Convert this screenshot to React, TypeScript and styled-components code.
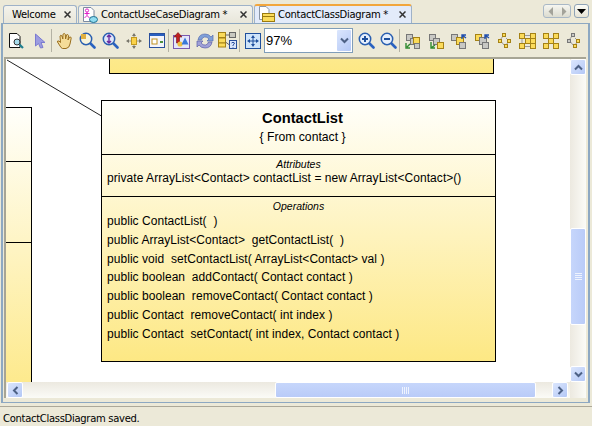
import React from 'react'
import styled, { createGlobalStyle } from 'styled-components'

const Global = createGlobalStyle`
  html, body { margin: 0; padding: 0; background: #ece9d8; }
  * { box-sizing: border-box; }
`

const Page = styled.div`
  width: 592px;
  height: 426px;
  display: flex;
  flex-direction: column;
  overflow: hidden;
  background: #ece9d8;
  font-family: 'Liberation Sans', Arial, sans-serif;
  font-size: 12px;
  color: #000;
`

const TabRow = styled.div`
  height: 23px;
  flex: none;
  display: flex;
  align-items: flex-end;
  padding: 0 3px;
  font-family: 'DejaVu Sans', sans-serif;
  font-size: 10px;
  letter-spacing: -0.3px;
`

const Tab = styled.div<{ $w: number; $active?: boolean }>`
  width: ${(p) => p.$w}px;
  height: ${(p) => (p.$active ? 19 : 18)}px;
  margin-right: 1px;
  display: flex;
  align-items: center;
  padding: 0 5px 0 3px;
  gap: 3px;
  background: ${(p) => (p.$active ? '#e3ebfa' : 'linear-gradient(#f4f3ec, #e8e6da)')};
  border: 1px solid #9fb2c8;
  border-bottom: none;
  border-top: ${(p) => (p.$active ? '2px solid #f2a63c' : '1px solid #9fb2c8')};
  border-radius: 3px 3px 0 0;
  white-space: nowrap;
`

const TabLabel = styled.span<{ $plain?: boolean }>`
  flex: 1;
  padding-left: ${(p) => (p.$plain ? 5 : 0)}px;
`

const TabClose = styled.span`
  width: 7px;
  height: 7px;
  flex: none;
  display: flex;
`

const TabSpacer = styled.div`
  flex: 1;
`

const NavGroup = styled.div`
  width: 28px;
  height: 14px;
  margin: 0 3px 5px 0;
  display: flex;
  align-items: center;
  justify-content: space-around;
  background: linear-gradient(#f6f6f0, #dcdcd0);
  border: 1px solid #a9b8c6;
  border-radius: 3px;
`

const DropButton = styled.div`
  width: 15px;
  height: 14px;
  margin: 0 0 5px 0;
  display: flex;
  align-items: center;
  justify-content: center;
  background: linear-gradient(#fbfbf6, #e6e4d6);
  border: 1px solid #8fa3b6;
  border-radius: 3px;
`

const Panel = styled.div`
  height: 380px;
  flex: none;
  margin: 0 2px 3px 1px;
  display: flex;
  flex-direction: column;
  border: 1px solid #8da8c2;
  border-left: 2px solid #8da8c2;
  border-right: 2px solid #8da8c2;
`

const Toolbar = styled.div`
  height: 33px;
  flex: none;
  display: flex;
  align-items: center;
  padding: 0 0 0 2px;
  background: #ece9d8;
`

const Slot = styled.div<{ $w?: number }>`
  width: ${(p) => p.$w ?? 23}px;
  height: 24px;
  flex: none;
  display: flex;
  align-items: center;
  justify-content: center;
`

const Sep = styled.div`
  width: 1px;
  height: 23px;
  flex: none;
  background: #b4b2a4;
  margin: 0 1px 0 0;
`

const ZoomCombo = styled.div`
  width: 89px;
  height: 25px;
  flex: none;
  margin: 0 2px 0 0;
  display: flex;
  align-items: center;
  justify-content: space-between;
  background: #fff;
  border: 1px solid #7f9db9;
  font-size: 13px;
  padding-left: 1px;
`

const ComboArrow = styled.div`
  width: 16px;
  height: 23px;
  display: flex;
  align-items: center;
  justify-content: center;
  background: linear-gradient(135deg, #dbe6fd, #b4c8f6);
  border: 1px solid #fff;
  border-radius: 2px;
`

const Body = styled.div`
  flex: 1;
  min-height: 0;
  display: flex;
  border-top: 2px solid #a7a595;
  border-left: 2px solid #a7a595;
  margin: 0 2px 4px 1px;
`

const Center = styled.div`
  flex: 1;
  min-width: 0;
  display: flex;
  flex-direction: column;
`

const Canvas = styled.div`
  flex: 1;
  min-height: 0;
  position: relative;
  overflow: hidden;
  background: #fff;
`

const Wire = styled.svg`
  position: absolute;
  left: 0;
  top: 0;
`

const ClassBox = styled.div<{ $x: number; $y: number; $w: number; $h: number }>`
  position: absolute;
  left: ${(p) => p.$x}px;
  top: ${(p) => p.$y}px;
  width: ${(p) => p.$w}px;
  height: ${(p) => p.$h}px;
  display: flex;
  flex-direction: column;
  border: 1px solid #000;
  background: linear-gradient(#fffffb 0%, #fde884 100%);
`

const Divider = styled.div`
  position: absolute;
  left: 0;
  top: 102px;
  width: 26px;
  height: 82px;
  border-top: 1px solid #000;
  border-bottom: 1px solid #000;
`

const Compartment = styled.div<{ $h?: number }>`
  ${(p) => (p.$h ? `height: ${p.$h}px; flex: none;` : 'flex: 1;')}
  border-bottom: 1px solid #000;
  &:last-child {
    border-bottom: none;
  }
`

const Header = styled(Compartment)`
  display: flex;
  flex-direction: column;
  align-items: center;
  padding: 8px 0 0 8px;
`

const ClassName = styled.div`
  font-weight: bold;
  font-size: 14.7px;
  line-height: 18px;
`

const Stereotype = styled.div`
  font-size: 12.2px;
  line-height: 18px;
  margin-top: 1px;
`

const Section = styled(Compartment)`
  padding: 3px 5px 0;
`

const SectionTitle = styled.div`
  font-style: italic;
  font-size: 10.5px;
  line-height: 13px;
  text-align: center;
`

const Member = styled.div`
  font-size: 12px;
  line-height: 18.8px;
  letter-spacing: 0.05px;
  white-space: pre;
`

const FirstAttr = styled(Member)`
  line-height: 15px;
`

const Ops = styled.div`
  margin-top: -1px;
`

const HBar = styled.div`
  height: 16px;
  flex: none;
  display: flex;
  align-items: center;
  padding: 0 2px 0 1px;
  background: linear-gradient(#ece9e0, #fbfbf7);
`

const VBar = styled.div`
  width: 16px;
  flex: none;
  display: flex;
  flex-direction: column;
  background: linear-gradient(90deg, #ece9e0, #fbfbf7);
  padding-bottom: 16px;
`

const ScrollButton = styled.div`
  width: 16px;
  height: 16px;
  flex: none;
  display: flex;
  align-items: center;
  justify-content: center;
  background: linear-gradient(135deg, #dbe6fd, #b4c8f6);
  border: 1px solid #fff;
  border-radius: 2px;
`

const Thumb = styled.div<{ $vertical?: boolean }>`
  display: flex;
  align-items: center;
  justify-content: center;
  background: ${(p) =>
    p.$vertical
      ? 'linear-gradient(90deg, #c6d6fb, #b9cbf8)'
      : 'linear-gradient(#c6d6fb, #b9cbf8)'};
  border: 1px solid #fff;
  border-radius: 2px;
`

const HThumb = styled(Thumb)`
  width: 261px;
  height: 16px;
  margin-left: 252px;
`

const VThumb = styled(Thumb)`
  width: 16px;
  height: 97px;
  margin-top: 153px;
`

const Grow = styled.div`
  flex: 1;
`

const Status = styled.div`
  flex: 1;
  border-top: 1px solid #aca899;
  padding: 5px 0 0 3px;
  font-family: 'DejaVu Sans', sans-serif;
  font-size: 10px;
  letter-spacing: -0.3px;
  line-height: 13px;
`

const ChevronSvg = styled.svg<{ $rot: number }>`
  transform: rotate(${(p) => p.$rot}deg);
`

/* tab + nav glyphs */
const CloseX = () => (
  <svg width="7" height="7" viewBox="0 0 7 7">
    <path d="M0.5 0.5 L6.5 6.5 M6.5 0.5 L0.5 6.5" stroke="#333" strokeWidth="1.5" />
  </svg>
)

const UseCaseDocIcon = () => (
  <svg width="16" height="16" viewBox="0 0 16 16">
    <path d="M1.5 .5 H9 L12 3.5 V14.5 H1.5 Z" fill="#fff" stroke="#7c8aa0" />
    <circle cx="5" cy="3.5" r="1.6" fill="none" stroke="#e020c8" />
    <path d="M5 5 V8.5 M2.5 6.5 H7.5 M5 8.5 L2.5 11 M5 8.5 L7.5 11" stroke="#e020c8" />
    <ellipse cx="11.5" cy="12.5" rx="4" ry="3" fill="#8fdcf0" stroke="#1f6f90" />
  </svg>
)

const ClassDocIcon = () => (
  <svg width="17" height="17" viewBox="0 0 17 17">
    <path d="M1.5 .5 H8 L11 3.5 V13.5 H1.5 Z" fill="#fff" stroke="#8a95a5" />
    <rect x="4.5" y="7.5" width="12" height="8" fill="#fbdc5a" stroke="#9a7a10" />
    <path d="M4.5 10.5 H16.5" stroke="#9a7a10" />
  </svg>
)

const chevronTurn = { up: 180, down: 0, left: 90, right: -90 }

const Chevron = ({ dir }: { dir: 'up' | 'down' | 'left' | 'right' }) => (
  <ChevronSvg $rot={chevronTurn[dir]} width="9" height="9" viewBox="0 0 9 9">
    <path d="M1 2.5 L4.5 6 L8 2.5" fill="none" stroke="#4d6185" strokeWidth="2" />
  </ChevronSvg>
)

const Tri = ({ dir }: { dir: 'left' | 'right' }) => (
  <svg width="6" height="9" viewBox="0 0 6 9">
    <path d={dir === 'left' ? 'M5 0 V9 L0.5 4.5 Z' : 'M1 0 V9 L5.5 4.5 Z'} fill="#a3a39a" />
  </svg>
)

const GripH = () => (
  <svg width="8" height="7" viewBox="0 0 8 7">
    <path d="M.5 0 V7 M2.5 0 V7 M4.5 0 V7 M6.5 0 V7" stroke="#eef3fe" />
  </svg>
)

const GripV = () => (
  <svg width="7" height="8" viewBox="0 0 7 8">
    <path d="M0 .5 H7 M0 2.5 H7 M0 4.5 H7 M0 6.5 H7" stroke="#eef3fe" />
  </svg>
)

/* toolbar drawings */
const PageSearchIcon = () => (
  <svg width="18" height="18" viewBox="0 0 18 18">
    <path d="M1.5 1.5 H9 L12 4.5 V15.5 H1.5 Z" fill="#fff" stroke="#111" />
    <circle cx="9" cy="10" r="3" fill="#a8dcec" stroke="#333" />
    <path d="M11.5 12.5 L15 16" stroke="#1f7f90" strokeWidth="2.2" />
  </svg>
)

const ArrowIcon = () => (
  <svg width="12" height="16" viewBox="0 0 12 16">
    <path d="M1.5 1 L11 9.5 H7 L9 14.5 L6.5 15 L4.5 10.5 L1.5 13 Z" fill="#9c9ce0" stroke="#7b7bd0" />
  </svg>
)

const HandIcon = () => (
  <svg width="18" height="18" viewBox="0 0 18 18">
    <path
      d="M5 15.5 L1.5 10 Q1 8.5 3 9 L4.5 10.5 L4 4 Q4.5 2.5 6 4 L6.8 7 L7 2.2 Q8.5 .8 9.3 2.3 L9.6 7 L10.6 2.8 Q12 2 12.6 3.5 L12 8 L13.6 5 Q15.2 4.6 15.2 6.2 L14 12 Q13.4 16 10 16.5 L6.5 16.5 Z"
      fill="#f5dc98"
      stroke="#9a6f1e"
    />
  </svg>
)

const Lens = ({ fill, children }: { fill: string; children?: React.ReactNode }) => (
  <svg width="17" height="17" viewBox="0 0 17 17">
    <path d="M10.5 10.5 L15.5 15.5" stroke="#2a62c0" strokeWidth="2.6" strokeLinecap="round" />
    <circle cx="7" cy="7" r="5.7" fill={fill} stroke="#2a5fb0" strokeWidth="1.5" />
    {children}
  </svg>
)

const ZoomAreaIcon = () => (
  <Lens fill="#f8f4dc">
    <path d="M2 2 H7 V7 H2 Z" fill="#e0b040" />
  </Lens>
)

const ZoomInfoIcon = () => (
  <Lens fill="#dfe6fa">
    <path d="M7 3 V11 M5 5 L7 3 L9 5 M5 9 L7 11 L9 9" fill="none" stroke="#6a2ca0" strokeWidth="1.4" />
  </Lens>
)

const ZoomPlusIcon = () => (
  <Lens fill="#e6effc">
    <path d="M4 7 H10 M7 4 V10" stroke="#1e4f9c" strokeWidth="2" />
  </Lens>
)

const ZoomMinusIcon = () => (
  <Lens fill="#e6effc">
    <path d="M4 7 H10" stroke="#1e4f9c" strokeWidth="2" />
  </Lens>
)

const MoveIcon = () => (
  <svg width="16" height="16" viewBox="0 0 16 16">
    <path d="M8 0 L10 3 H6 Z M8 16 L10 13 H6 Z M0 8 L3 6 V10 Z M16 8 L13 6 V10 Z" fill="#77756a" />
    <path d="M8 3 V13 M3 8 H13" stroke="#9a988c" />
    <rect x="5.5" y="4.5" width="5" height="7" fill="#fad24a" stroke="#c29a20" />
  </svg>
)

const WindowIcon = () => (
  <svg width="16" height="15" viewBox="0 0 16 15">
    <rect x=".5" y=".5" width="15" height="14" fill="#f4f4fa" stroke="#2a4f9c" />
    <rect x="1" y="1" width="14" height="2" fill="#2a5fc0" />
    <rect x="3" y="6" width="5" height="5" fill="#fff" stroke="#c09020" />
    <rect x="11" y="8" width="3" height="2" fill="#4f9040" />
  </svg>
)

const LayoutIcon = () => (
  <svg width="19" height="17" viewBox="0 0 19 17">
    <rect x="1.5" y="3.5" width="16" height="13" fill="#e4e6fa" stroke="#7a5ab0" />
    <path d="M6 0.5 L10 5 H7.5 V11 H4.5 V5 H2 Z" fill="#c02020" stroke="#701010" strokeWidth=".6" />
    <circle cx="8" cy="12" r="2.6" fill="#f0c040" />
    <path d="M13 5.5 L16.5 12.5 H9.5 Z" fill="#3a78d8" />
  </svg>
)

const RefreshIcon = () => (
  <svg width="18" height="18" viewBox="0 0 18 18">
    <path d="M2 8 Q3 2 9 2 Q13 2 15 5 L17 3 V9 H11 L13 7 Q11 4.5 8.5 5 Q6 5.5 5.5 8 Z" fill="#7fa0d8" stroke="#5a6fb0" strokeWidth=".7" />
    <path d="M16 10 Q15 16 9 16 Q5 16 3 13 L1 15 V9 H7 L5 11 Q7 13.5 9.5 13 Q12 12.5 12.5 10 Z" fill="#a0a0d8" stroke="#5a5fa8" strokeWidth=".7" />
  </svg>
)

const MapHelpIcon = () => (
  <svg width="21" height="19" viewBox="0 0 21 19">
    <rect x="1.5" y="1.5" width="7" height="5" fill="#fbdb5a" stroke="#a58216" />
    <rect x="1.5" y="7" width="7" height="5" fill="#fbdb5a" stroke="#a58216" />
    <rect x="1.5" y="12" width="7" height="4" fill="#fbdb5a" stroke="#a58216" />
    <rect x="12.5" y="1.5" width="6" height="5" fill="#c8c8c0" stroke="#666" />
    <rect x="12.5" y="9.5" width="7" height="8" fill="#dbe6fc" stroke="#2a4f9c" />
    <path d="M14.5 12 Q16 10.5 17.5 12 Q17 13.5 16 14 V15 M16 16 V16.6" fill="none" stroke="#2a4f9c" />
    <path d="M8.5 4 H12 M8.5 11 L12.5 14" stroke="#666" />
  </svg>
)

const FitIcon = () => (
  <svg width="16" height="16" viewBox="0 0 16 16">
    <rect x=".5" y=".5" width="15" height="15" fill="#cfe4fa" stroke="#1f4f9c" />
    <path d="M8 2 L10 5 H6 Z M8 14 L10 11 H6 Z M2 8 L5 6 V10 Z M14 8 L11 6 V10 Z" fill="#1f4f9c" />
    <path d="M8 5 V11 M5 8 H11" stroke="#1f4f9c" />
  </svg>
)

const Node = ({ x, y, s = 5, gold }: { x: number; y: number; s?: number; gold?: boolean }) => (
  <rect
    x={x + 0.5}
    y={y + 0.5}
    width={s}
    height={s}
    fill={gold ? '#fbdb5a' : '#c8c8c4'}
    stroke={gold ? '#a58216' : '#777'}
  />
)

const AlignIcon = ({ variant }: { variant: 0 | 1 | 2 | 3 }) => (
  <svg width="16" height="16" viewBox="0 0 16 16">
    {variant < 2 ? (
      <>
        <Node x={1} y={1} s={6} />
        <Node x={5} y={5} s={6} />
        {variant === 0 ? (
          <>
            <Node x={8} y={4} s={6} gold />
            <Node x={9} y={10} s={5} />
            <path d="M1 10 V15 H5 M2 14 L5 11" fill="none" stroke="#2f8a2f" strokeWidth="1.4" />
          </>
        ) : (
          <>
            <Node x={9} y={9} s={6} gold />
            <path d="M3 9 V15 H7 M3 15 L7 12" fill="none" stroke="#2f8a2f" strokeWidth="1.4" />
          </>
        )}
      </>
    ) : (
      <>
        <Node x={variant === 2 ? 0 : 1} y={1} s={6} gold={variant === 3} />
        <Node x={5} y={4} s={7} gold={variant === 2} />
        <Node x={8} y={9} s={6} />
        <path d="M11 6 V2 H15 M11 2 L15 5" fill="none" stroke="#1f4fb0" strokeWidth="1.4" />
      </>
    )}
  </svg>
)

const CycleIcon = ({ gray }: { gray?: boolean }) => (
  <svg width="14" height="16" viewBox="0 0 14 16">
    <path d="M6 2 L2 7 L6 12 M8 5 L11 8 L8 12" fill="none" stroke="#999" />
    <Node x={4} y={0} s={3} gold={!gray} />
    <Node x={0} y={6} s={3} gold={!gray} />
    <Node x={9} y={6} s={3} gold />
    <Node x={6} y={11} s={3} gold />
  </svg>
)

const GridLayoutIcon = () => (
  <svg width="17" height="16" viewBox="0 0 17 16">
    <rect x="3" y="2.5" width="11" height="11" fill="none" stroke="#999" />
    <Node x={0} y={0} gold />
    <Node x={11} y={0} gold />
    <Node x={6} y={5} gold />
    <Node x={11} y={5} gold />
    <Node x={0} y={10} gold />
    <Node x={11} y={10} gold />
  </svg>
)

const CrossIcon = () => (
  <svg width="16" height="16" viewBox="0 0 16 16">
    <path d="M3 3 L13 13 M13 3 L3 13" stroke="#999" />
    <Node x={0} y={0} gold />
    <Node x={10} y={0} gold />
    <Node x={5} y={5} gold />
    <Node x={0} y={10} gold />
    <Node x={10} y={10} gold />
  </svg>
)

const operations = [
  'public ContactList(  )',
  'public ArrayList<Contact>  getContactList(  )',
  'public void  setContactList( ArrayList<Contact> val )',
  'public boolean  addContact( Contact contact )',
  'public boolean  removeContact( Contact contact )',
  'public Contact  removeContact( int index )',
  'public Contact  setContact( int index, Contact contact )',
]

const App: React.FC = () => {
  return (
    <Page>
      <Global />
      <TabRow>
        <Tab $w={74}>
          <TabLabel $plain>Welcome</TabLabel>
          <TabClose>
            <CloseX />
          </TabClose>
        </Tab>
        <Tab $w={175}>
          <UseCaseDocIcon />
          <TabLabel>ContactUseCaseDiagram *</TabLabel>
          <TabClose>
            <CloseX />
          </TabClose>
        </Tab>
        <Tab $w={158} $active>
          <ClassDocIcon />
          <TabLabel>ContactClassDiagram *</TabLabel>
          <TabClose>
            <CloseX />
          </TabClose>
        </Tab>
        <TabSpacer />
        <NavGroup>
          <Tri dir="left" />
          <Tri dir="right" />
        </NavGroup>
        <DropButton>
          <svg width="9" height="5" viewBox="0 0 9 5">
            <path d="M0 0 H9 L4.5 5 Z" fill="#000" />
          </svg>
        </DropButton>
      </TabRow>
      <Panel>
        <Toolbar>
          <Slot><PageSearchIcon /></Slot>
          <Slot><ArrowIcon /></Slot>
          <Sep />
          <Slot><HandIcon /></Slot>
          <Slot><ZoomAreaIcon /></Slot>
          <Slot><ZoomInfoIcon /></Slot>
          <Slot><MoveIcon /></Slot>
          <Slot><WindowIcon /></Slot>
          <Sep />
          <Slot><LayoutIcon /></Slot>
          <Slot><RefreshIcon /></Slot>
          <Slot><MapHelpIcon /></Slot>
          <Sep />
          <Slot><FitIcon /></Slot>
          <ZoomCombo>
            97%
            <ComboArrow>
              <Chevron dir="down" />
            </ComboArrow>
          </ZoomCombo>
          <Slot $w={22}><ZoomPlusIcon /></Slot>
          <Slot $w={22}><ZoomMinusIcon /></Slot>
          <Sep />
          <Slot><AlignIcon variant={0} /></Slot>
          <Slot><AlignIcon variant={1} /></Slot>
          <Slot><AlignIcon variant={2} /></Slot>
          <Slot><AlignIcon variant={3} /></Slot>
          <Slot><CycleIcon /></Slot>
          <Slot><GridLayoutIcon /></Slot>
          <Slot><CrossIcon /></Slot>
          <Slot><CycleIcon gray /></Slot>
        </Toolbar>
        <Body>
          <Center>
            <Canvas>
              <Wire width="110" height="70">
                <line x1="1" y1="1" x2="95.5" y2="57" stroke="#222" />
              </Wire>
              <ClassBox $x={103} $y={-200} $w={385} $h={215} />
              <ClassBox $x={-100} $y={48} $w={126} $h={300} />
              <Divider />
              <ClassBox $x={95} $y={41} $w={395} $h={262}>
                <Header $h={54}>
                  <ClassName>ContactList</ClassName>
                  <Stereotype>{'{ From contact }'}</Stereotype>
                </Header>
                <Section $h={42}>
                  <SectionTitle>Attributes</SectionTitle>
                  <FirstAttr>{'private ArrayList<Contact> contactList = new ArrayList<Contact>()'}</FirstAttr>
                </Section>
                <Section>
                  <SectionTitle>Operations</SectionTitle>
                  <Ops>
                    {operations.map((op) => (
                      <Member key={op}>{op}</Member>
                    ))}
                  </Ops>
                </Section>
              </ClassBox>
            </Canvas>
            <HBar>
              <ScrollButton>
                <Chevron dir="left" />
              </ScrollButton>
              <HThumb>
                <GripH />
              </HThumb>
              <Grow />
              <ScrollButton>
                <Chevron dir="right" />
              </ScrollButton>
            </HBar>
          </Center>
          <VBar>
            <ScrollButton>
              <Chevron dir="up" />
            </ScrollButton>
            <VThumb $vertical>
              <GripV />
            </VThumb>
            <Grow />
            <ScrollButton>
              <Chevron dir="down" />
            </ScrollButton>
          </VBar>
        </Body>
      </Panel>
      <Status>ContactClassDiagram saved.</Status>
    </Page>
  )
}

export default App
